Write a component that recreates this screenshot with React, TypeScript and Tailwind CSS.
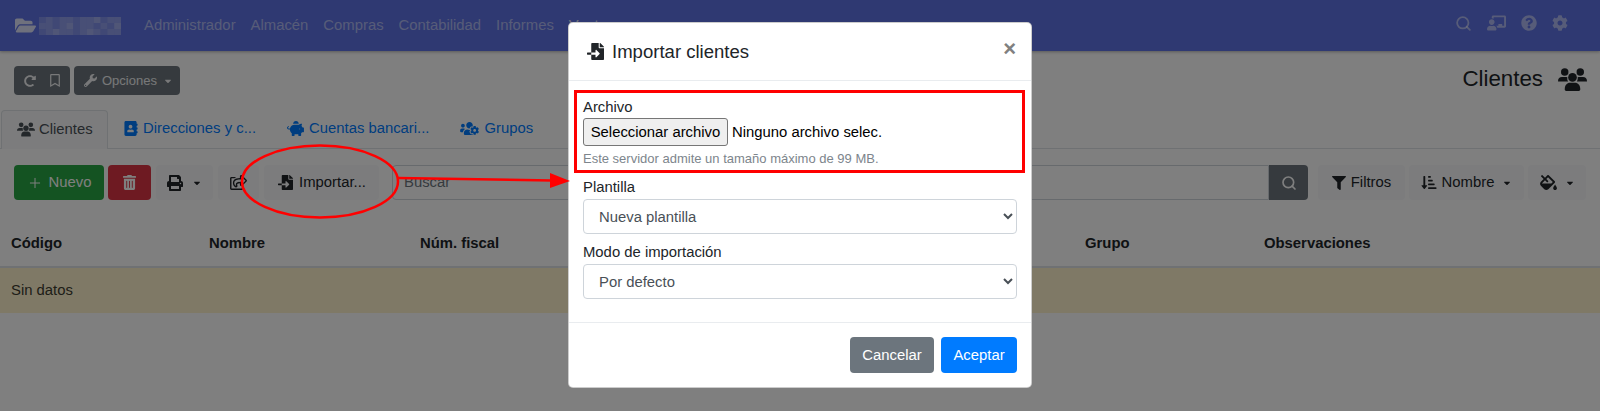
import React from "react";
import {
  FaFolderOpen, FaRedoAlt, FaRegBookmark, FaWrench, FaCaretDown, FaAddressBook, FaPiggyBank, FaUsersCog,
  FaTrashAlt, FaPrint, FaRegShareSquare, FaFileImport, FaFilter, FaSortAmountDownAlt, FaFillDrip,
  FaChalkboardTeacher, FaQuestionCircle, FaCog,
} from "react-icons/fa";
import { Plus, Search } from "lucide-react";

const mosaic = [
  "ababbabbcabb",
  "bbabcabbabac",
  "abcbbabcbabb",
];

function PeopleIcon({ className }: { className: string }) {
  return (
    <svg className={className} viewBox="0 0 28 22" fill="currentColor">
      <circle cx="6.5" cy="3.8" r="3.6" />
      <circle cx="21.5" cy="3.8" r="3.6" />
      <circle cx="14" cy="9" r="4.2" />
      <path d="M0 12.6C0 10 1.6 8.6 3.8 8.6h3.6c.7 0 1.2.1 1.7.4-.3 1-.2 2.6.7 4H.6C.2 13 0 12.9 0 12.6Z" />
      <path d="M28 12.6C28 10 26.4 8.6 24.2 8.6h-3.6c-.7 0-1.2.1-1.7.4.3 1 .2 2.6-.7 4h9.4c.4 0 .6-.1.6-.4Z" />
      <path d="M6.5 20.2c0-3.6 2.3-6 5-6h5c2.7 0 5 2.4 5 6v.4c0 .8-.6 1.4-1.4 1.4H7.9c-.8 0-1.4-.6-1.4-1.4Z" />
    </svg>
  );
}

function Tab({ icon, label, className }: { icon: React.ReactNode; label: string; className: string }) {
  return (
    <div className={`flex items-center gap-[5px] pb-[2px] text-[#007bff] ${className}`}>
      {icon}
      <span>{label}</span>
    </div>
  );
}

function LightBtn({ children, className }: { children: React.ReactNode; className: string }) {
  return <div className={`h-[35px] rounded-[4px] bg-[#f8f9fa] flex items-center justify-center text-[#212529] ${className}`}>{children}</div>;
}

export default function App() {
  return (
    <div className="relative w-full h-[411px] overflow-hidden bg-white text-[14.85px] text-[#212529] font-['Liberation_Sans',Arial,sans-serif]">
      <nav className="h-[51px] bg-[#5e72e4] flex items-center pl-[15px] pr-[32px] text-white/50 shadow-[0_1px_3px_rgba(0,0,0,0.3)]">
        <FaFolderOpen className="w-[21px] h-[19px] text-white/80" />
        <svg className="ml-[3px] w-[82px] h-[18px] blur-[0.5px]" viewBox="0 0 12 3" preserveAspectRatio="none">
          {mosaic.map((row, y) =>
            row.split("").map((c, x) => (
              <rect key={`${x}-${y}`} x={x} y={y} width="1" height="1" fill="#ffffff" opacity={c === "a" ? 0.22 : c === "b" ? 0.32 : 0.42} />
            ))
          )}
        </svg>
        <div className="ml-[23px] flex gap-[15px]">
          <span>Administrador</span>
          <span>Almacén</span>
          <span>Compras</span>
          <span>Contabilidad</span>
          <span>Informes</span>
          <span className="text-white/80">Ventas</span>
        </div>
        <div className="ml-auto -mt-[5px] flex items-center gap-[15px]">
          <Search className="w-[17px] h-[17px]" strokeWidth={2.5} />
          <FaChalkboardTeacher className="w-[19px] h-[16px]" />
          <FaQuestionCircle className="w-[16px] h-[16px]" />
          <FaCog className="w-[16px] h-[16px]" />
        </div>
      </nav>

      <div className="flex items-start justify-between pl-[14px] pr-[13px] pt-[15px] h-[59px]">
        <div className="flex gap-[4px] text-[13px] text-white/90">
          <div className="h-[29px] w-[56px] rounded-[4px] bg-[#6c757d] flex items-center justify-around px-[3px]">
            <FaRedoAlt className="w-[12px] h-[12px]" />
            <FaRegBookmark className="w-[10px] h-[13px]" />
          </div>
          <div className="h-[29px] w-[106px] rounded-[4px] bg-[#6c757d] flex items-center pl-[10px] gap-[5px]">
            <FaWrench className="w-[13px] h-[13px]" />
            <span>Opciones</span>
            <FaCaretDown className="ml-[1px] w-[10px] h-[10px]" />
          </div>
        </div>
        <div className="flex items-center gap-[15px] text-[22.3px] h-[29px] leading-none -mt-[1px]">
          <span>Clientes</span>
          <PeopleIcon className="w-[29px] h-[23px]" />
        </div>
      </div>

      <div className="h-[39px] flex border-b border-[#dee2e6]">
        <div className="ml-[1px] h-[39px] w-[107px] bg-[#f8f9fa] border border-b-0 border-[#dee2e6] rounded-t-[4px] flex items-center pl-[15px] pb-[2px] gap-[4px] text-[#495057]">
          <PeopleIcon className="w-[18px] h-[15px]" />
          <span>Clientes</span>
        </div>
        <Tab className="ml-[16px]" icon={<FaAddressBook className="w-[14px] h-[15px]" />} label="Direcciones y c..." />
        <Tab className="ml-[31px]" icon={<FaPiggyBank className="w-[17px] h-[15px]" />} label="Cuentas bancari..." />
        <Tab className="ml-[31px]" icon={<FaUsersCog className="w-[19px] h-[15px]" />} label="Grupos" />
      </div>

      <div className="mt-[16px] flex items-center pl-[14px] pr-[14px]">
        <div className="h-[35px] w-[90px] rounded-[4px] bg-[#28a745] text-white flex items-center justify-center gap-[6px]">
          <Plus className="w-[16px] h-[16px]" strokeWidth={1.5} />
          <span>Nuevo</span>
        </div>
        <div className="ml-[4px] h-[35px] w-[43px] rounded-[4px] bg-[#dc3545] text-white flex items-center justify-center">
          <FaTrashAlt className="w-[13px] h-[15px]" />
        </div>
        <LightBtn className="ml-[5px] w-[57px] gap-[9px]">
          <FaPrint className="w-[16px] h-[16px]" />
          <FaCaretDown className="w-[10px] h-[10px]" />
        </LightBtn>
        <LightBtn className="ml-[5px] w-[41px]">
          <FaRegShareSquare className="w-[17px] h-[15px]" />
        </LightBtn>
        <LightBtn className="ml-[5px] w-[115px] gap-[6px] pl-[1px]">
          <FaFileImport className="w-[15px] h-[15px]" />
          <span>Importar...</span>
        </LightBtn>
        <div className="ml-[13px] flex-1 flex h-[35px]">
          <div className="flex-1 border border-[#ced4da] rounded-l-[4px] bg-white text-[#6c757d] flex items-center pl-[11px]">Buscar</div>
          <div className="w-[39px] rounded-r-[4px] bg-[#6c757d] text-white flex items-center justify-center">
            <Search className="w-[16px] h-[16px]" strokeWidth={2.5} />
          </div>
        </div>
        <LightBtn className="ml-[10px] w-[87px] gap-[5px]">
          <FaFilter className="w-[14px] h-[14px]" />
          <span>Filtros</span>
        </LightBtn>
        <LightBtn className="ml-[4px] w-[115px] gap-[5px]">
          <FaSortAmountDownAlt className="w-[16px] h-[15px]" />
          <span>Nombre</span>
          <FaCaretDown className="ml-[3px] w-[10px] h-[10px]" />
        </LightBtn>
        <LightBtn className="ml-[4px] w-[58px] gap-[8px]">
          <FaFillDrip className="w-[17px] h-[15px]" />
          <FaCaretDown className="w-[10px] h-[10px]" />
        </LightBtn>
      </div>

      <div className="mt-[31px] h-[37px] pt-[1px] grid grid-cols-[198px_211px_665px_179px_1fr] pl-[11px] font-bold border-b-2 border-[#dee2e6]">
        <span>Código</span>
        <span>Nombre</span>
        <span>Núm. fiscal</span>
        <span>Grupo</span>
        <span>Observaciones</span>
      </div>
      <div className="h-[45px] bg-[#fff3cd] flex items-center pl-[11px] text-[#3c3c30]">Sin datos</div>

      {/* Modal backdrop */}
      <div className="absolute inset-0 bg-black/50" />

      {/* Annotation under the modal */}
      <svg className="absolute inset-0 w-full h-full" viewBox="0 0 1600 411">
        <ellipse cx="320" cy="181.5" rx="78" ry="36" fill="none" stroke="#ff0000" strokeWidth="2.5" />
      </svg>

      {/* Modal */}
      <div className="absolute left-[568px] top-[22px] w-[464px] h-[366px] bg-white rounded-[5px] border border-black/20 flex flex-col">
        <div className="h-[58px] flex items-center pl-[17px] pr-[15px] border-b border-[#e9ecef] text-[18.56px]">
          <FaFileImport className="w-[19px] h-[17px]" />
          <span className="ml-[7px]">Importar clientes</span>
          <span className="ml-auto text-[#808080] font-bold text-[22px] leading-none -mt-[6px]">×</span>
        </div>
        <div className="flex-1 px-[14px] pt-[18px]">
          <div className="leading-[17px]">Archivo</div>
          <div className="mt-[2px] flex items-center">
            <button className="h-[28px] w-[145px] rounded-[3px] border border-[#767676] bg-[#efefef] text-black">Seleccionar archivo</button>
            <span className="ml-[4px] text-black">Ninguno archivo selec.</span>
          </div>
          <div className="mt-[5px] text-[13px] leading-[16px] text-[#7d858c]">Este servidor admite un tamaño máximo de 99 MB.</div>
          <div className="mt-[12px] leading-[17px]">Plantilla</div>
          <select defaultValue="a" className="mt-[3px] block w-[434px] h-[35px] rounded-[4px] border border-[#ced4da] bg-white px-[11px] text-[#495057]">
            <option value="a">Nueva plantilla</option>
          </select>
          <div className="mt-[10px] leading-[17px]">Modo de importación</div>
          <select defaultValue="a" className="mt-[3px] block w-[434px] h-[35px] rounded-[4px] border border-[#ced4da] bg-white px-[11px] text-[#495057]">
            <option value="a">Por defecto</option>
          </select>
        </div>
        <div className="h-[65px] border-t border-[#e9ecef] flex items-center justify-end gap-[7px] pr-[14px]">
          <button className="h-[36px] w-[84px] rounded-[4px] bg-[#6c757d] text-white">Cancelar</button>
          <button className="h-[36px] w-[76px] rounded-[4px] bg-[#007bff] text-white">Aceptar</button>
        </div>
      </div>

      {/* Annotations over the modal */}
      <svg className="absolute inset-0 w-full h-full" viewBox="0 0 1600 411">
        <line x1="398" y1="178" x2="552" y2="180.5" stroke="#ff0000" strokeWidth="2.5" />
        <polygon points="550,173 570,181 550,188" fill="#ff0000" />
      </svg>
      <div className="absolute left-[574px] top-[90px] w-[451px] h-[83px] border-[3px] border-[#ff0000]" />
    </div>
  );
}
